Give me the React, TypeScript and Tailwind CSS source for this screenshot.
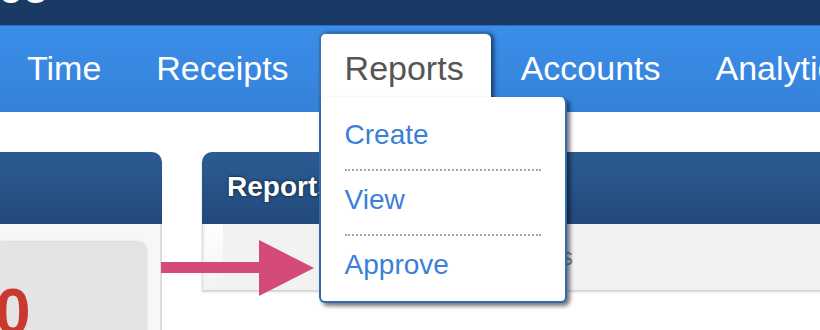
import React from 'react'

const navItems = ['Time', 'Receipts', 'Reports', 'Accounts', 'Analytics']
const menuItems = ['Create', 'View', 'Approve']

function ReportsTab() {
  return (
    <div className="relative h-[79px] self-end">
      <div className="h-full rounded-t-[6px] border-l-2 border-t border-[#3a72b0] bg-white pl-[24px] pr-[27px] pt-[14px] text-[34px] leading-[40px] text-[#555] shadow-[3px_0_4px_rgba(0,0,0,0.55)]">
        Reports
      </div>
      <div className="absolute left-0 top-[64px] z-10 w-[248px] rounded-b-[6px] rounded-tr-[6px] border-2 border-t-0 border-[#2e6db0] bg-white px-[24px] pb-[20px] pt-[22px] shadow-[3px_3px_4px_rgba(0,0,0,0.55)]">
        {menuItems.map((item, i) => (
          <div key={item}>
            {i > 0 && <div className="border-t-2 border-dotted border-[#a6a6a6]" />}
            <div className={`text-[28px] leading-[32px] text-[#3b7fd8] ${i > 0 ? 'pt-[13px]' : ''} ${i < menuItems.length - 1 ? 'pb-[18px]' : ''}`}>
              {item}
            </div>
          </div>
        ))}
      </div>
    </div>
  )
}

function CardHeader({ children, rounded }: { children?: React.ReactNode; rounded: string }) {
  return (
    <div className={`h-[72px] bg-gradient-to-b from-[#2c5c93] to-[#22497b] ${rounded}`}>{children}</div>
  )
}

export default function App() {
  return (
    <div className="relative h-[330px] w-[820px] overflow-hidden bg-white font-['Liberation_Sans',Arial,sans-serif]">
      {/* top brand bar */}
      <div className="h-[25px] overflow-hidden bg-[#1a3a65]">
        <div className="-mt-[33px] ml-[-2px] text-[48px] leading-[40px] text-white">ce</div>
      </div>

      {/* main nav */}
      <nav className="flex h-[87px] gap-[5px] border-t border-[#2d6cb3] bg-gradient-to-b from-[#3b8eea] to-[#3581d8] pl-[2px]">
        {navItems.map((item) =>
          item === 'Reports' ? (
            <ReportsTab key={item} />
          ) : (
            <div key={item} className="h-[79px] self-end whitespace-nowrap px-[25px] pt-[15px] text-[34px] leading-[40px] text-white">
              {item}
            </div>
          )
        )}
      </nav>

      {/* cards */}
      <div className="mt-[40px] flex items-start gap-[40px]">
        <div className="w-[162px] shrink-0">
          <CardHeader rounded="rounded-tr-[10px]" />
          <div className="h-[120px] border-r-2 border-[#dedede] bg-[#f8f7f7] pr-[14px] pt-[18px]">
            <div className="h-[100px] rounded-tr-[9px] bg-[#e5e4e4] pt-[38px] shadow-[0_0_3px_rgba(0,0,0,0.25)]">
              <div className="-ml-[5px] text-[64px] font-bold leading-none text-[#c9392f]">0</div>
            </div>
          </div>
        </div>

        <div className="w-[640px] shrink-0 shadow-[0_2px_2px_rgba(0,0,0,0.18)]">
          <CardHeader rounded="rounded-t-[10px]">
            <div className="pl-[25px] pt-[19px] text-[28px] font-bold leading-[32px] text-white [text-shadow:0_0_3px_rgba(0,0,0,0.8)]">
              Reports
            </div>
          </CardHeader>
          <div className="flex h-[66px] items-center border-l border-[#dcdcdc] bg-[#f2f2f2]">
            <div className="ml-[2px] h-full w-[18px] bg-gradient-to-b from-white to-[#f2f2f2]" />
            <div className="w-[350px] whitespace-nowrap text-right text-[23px] leading-[28px] text-[#7489ab]">
              Pending approvals
            </div>
          </div>
        </div>
      </div>

      {/* annotation arrow */}
      <svg className="absolute left-[160px] top-[238px]" width="160" height="60" viewBox="0 0 160 60">
        <rect x="1" y="24" width="100" height="11" fill="#d54b78" />
        <polygon points="99,2 154,30 99,58" fill="#d54b78" />
      </svg>
    </div>
  )
}
